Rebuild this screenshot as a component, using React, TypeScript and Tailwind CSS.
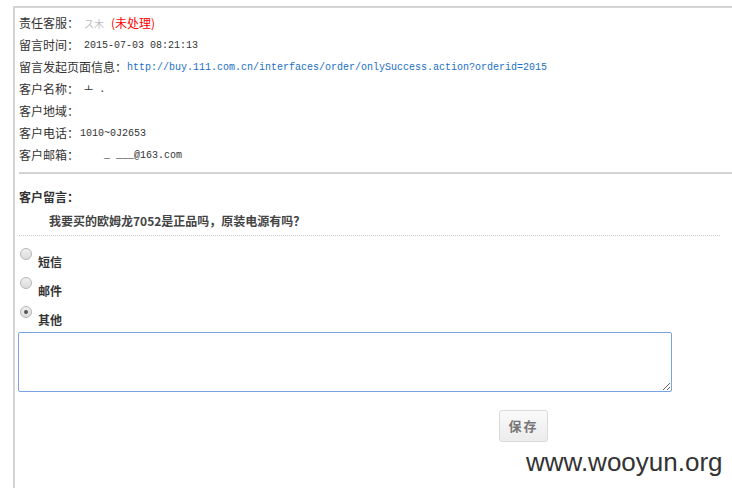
import React from 'react';

const cjk = { fontFamily: '"Noto Sans CJK SC", "Liberation Sans", sans-serif' };
const mono = { fontFamily: '"Liberation Mono", "Noto Sans CJK SC", monospace' };

function Row({ label, gap = 5, children }: { label: string; gap?: number; children?: React.ReactNode }) {
  return (
    <div className="flex items-center h-[22px] text-[12px] text-[#333]">
      <span>{label}：</span>
      <span className="flex items-center" style={{ marginLeft: gap }}>{children}</span>
    </div>
  );
}

function Radio({ label, checked }: { label: string; checked?: boolean }) {
  return (
    <label className="flex items-start h-[29px]">
      <span className="mt-[2px] ml-[1px] w-[12px] h-[12px] rounded-full border border-[#b5b5b5] bg-gradient-to-b from-[#f0f0f0] to-[#dcdcdc] flex items-center justify-center">
        {checked && <span className="w-[4px] h-[4px] rounded-full bg-[#555]" />}
      </span>
      <span className="ml-[6px] mt-[7px] text-[12px] font-bold text-[#333]">{label}</span>
    </label>
  );
}

export default function App() {
  return (
    <div className="relative w-[732px] h-[488px] bg-white overflow-hidden" style={cjk}>
      <div className="ml-[13px] mt-[6px] h-[482px] border-l-2 border-t-2 border-[#d4d4d4] pl-[4px] pt-[4px]">
        {/* info rows */}
        <div>
          <Row label="责任客服">
            <span className="text-[#bbb] text-[10px] w-[27px]">ス木</span>
            <span className="text-[#f00]">(未处理)</span>
          </Row>
          <Row label="留言时间">
            <span className="text-[10px]" style={mono}>2015-07-03 08:21:13</span>
          </Row>
          <Row label="留言发起页面信息" gap={0}>
            <span className="text-[10px] text-[#1a6fc4]" style={mono}>
              http://buy.111.com.cn/interfaces/order/onlySuccess.action?orderid=2015
            </span>
          </Row>
          <Row label="客户名称">
            <span className="text-[10px]" style={mono}>ㅗ .</span>
          </Row>
          <Row label="客户地域" />
          <Row label="客户电话" gap={1}>
            <span className="text-[10px]" style={mono}>1010~0J2653</span>
          </Row>
          <Row label="客户邮箱" gap={25}>
            <span className="text-[10px]" style={mono}>_ ___@163.com</span>
          </Row>
        </div>

        <div className="mt-[6px] border-t-2 border-[#d4d4d4]" />

        {/* message */}
        <div className="pt-[14px]">
          <div className="text-[12px] font-bold text-[#333] h-[20px]">客户留言：</div>
          <div className="pl-[30px] pt-[4px] text-[12px] font-bold text-[#444] h-[27px]">
            我要买的欧姆龙7052是正品吗，原装电源有吗？
          </div>
        </div>
        <div className="mr-[12px] border-t border-dotted border-[#c8c8c8]" />

        <div className="pt-[10px]">
          <Radio label="短信" />
          <Radio label="邮件" />
          <Radio label="其他" checked />
        </div>

        <textarea className="block -mt-px -ml-px w-[654px] h-[60px] border border-[#7aa3e6] rounded-[2px] outline-none resize" />

        <div className="flex pl-[480px] pt-[18px]">
          <button className="w-[49px] h-[32px] border border-[#dadada] rounded-[3px] bg-gradient-to-b from-[#fafafa] to-[#ececec] text-[13px] font-bold text-[#777] tracking-[2px]">
            保存
          </button>
        </div>
      </div>

      {/* watermark */}
      <div
        className="absolute left-[526px] top-[443px] text-[26px] text-[#333]"
        style={{ fontFamily: '"Liberation Sans", Arial, sans-serif' }}
      >
        www.wooyun.org
      </div>
    </div>
  );
}
